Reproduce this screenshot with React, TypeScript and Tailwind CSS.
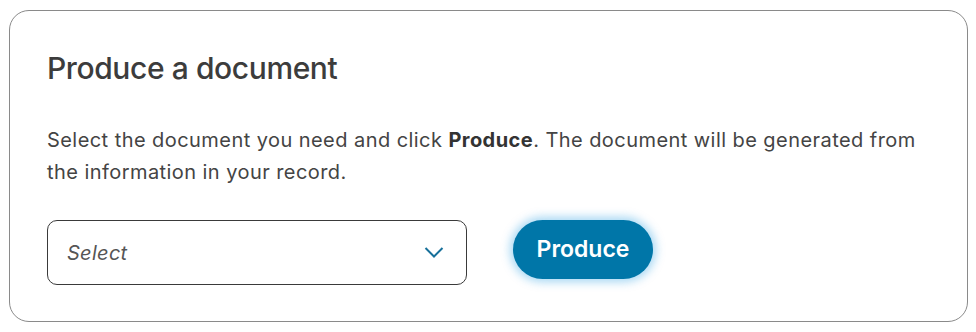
import React from "react";

const ProduceDocument = () => {
  return (
    <div className="w-[976px] h-[332px] bg-white p-[10px_8px_10px_9px] font-['Inter',sans-serif]">
      <div className="h-full rounded-[20px] border border-[#8a8a8a] bg-white pl-[37px] pt-[37px]">
        <h2 className="text-[30px] leading-[40px] font-medium text-[#3c3c3c] tracking-[-0.4px]">
          Produce a document
        </h2>
        <p className="mt-[36px] text-[20px] leading-[32px] text-[#444] tracking-[0.44px]">
          Select the document you need and click <b className="font-bold text-[#333]">Produce</b>. The document will be generated from
          <br />
          the information in your record.
        </p>
        <div className="flex items-start gap-[46px] mt-[32px]">
          {/* Select box */}
          <div className="w-[420px] h-[65px] rounded-[10px] border border-[#3a3a3a] flex items-center justify-between pl-[19px] pr-[22px]">
            <span className="italic text-[20px] text-[#555] tracking-[0.3px]">Select</span>
            <svg width="20" height="11" viewBox="0 0 20 11" fill="none">
              <path d="M1.5 1 L10 9.5 L18.5 1" stroke="#17709a" strokeWidth="2" />
            </svg>
          </div>
          {/* Button */}
          <button className="h-[59px] w-[140px] rounded-full bg-[#0076a8] text-white text-[23px] font-semibold shadow-[0_0_10px_3px_rgba(0,140,220,0.35)]">
            Produce
          </button>
        </div>
      </div>
    </div>
  );
};

export default function App() {
  return <ProduceDocument />;
}
